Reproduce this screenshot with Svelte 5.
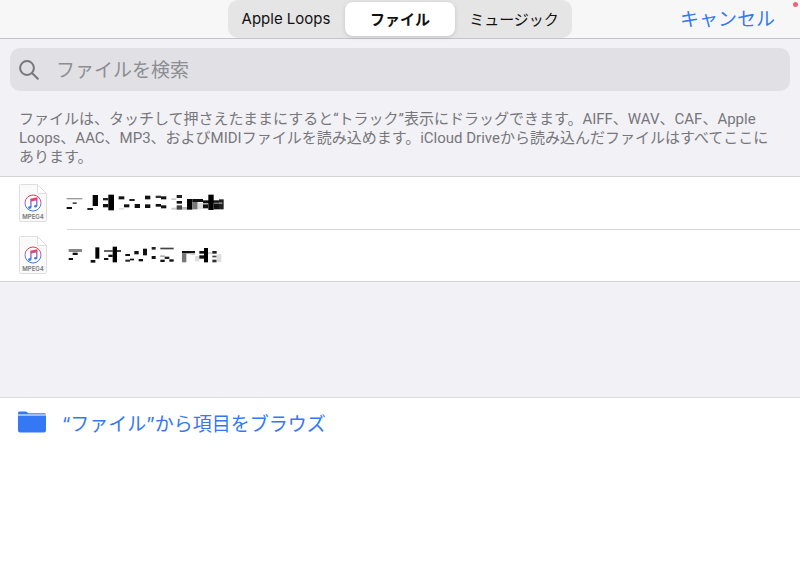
<script lang="ts">
  type Block = [x: number, y: number, w: number, h: number, shade: string];

  interface FileEntry {
    id: number;
    type: string;
    blocks: Block[];
  }

  const tabs = ['Apple Loops', 'ファイル', 'ミュージック'];

  // file names are pixelated, each block is one run of the mosaic
  const files: FileEntry[] = [
    {
      id: 1,
      type: 'MPEG4',
      blocks: [
        [20, 36, 47, 4, '#999'], [38, 49, 12, 5, '#444'], [20, 63, 16, 6, '#111'],
        [98, 27, 16, 33, '#080808'], [82, 66, 17, 6, '#222'],
        [145, 26, 17, 47, '#000'], [129, 36, 16, 7, '#222'], [129, 54, 16, 10, '#111'],
        [176, 31, 17, 9, '#111'], [176, 66, 16, 5, '#ddd'], [192, 55, 16, 9, '#111'],
        [208, 39, 16, 6, '#222'], [224, 54, 16, 12, '#111'],
        [255, 29, 16, 11, '#111'], [255, 55, 16, 11, '#111'],
        [287, 29, 16, 7, '#333'], [303, 31, 16, 9, '#111'], [287, 54, 16, 8, '#111'], [303, 58, 16, 9, '#111'],
        [334, 37, 15, 5, '#ccc'], [350, 27, 16, 9, '#222'], [350, 45, 16, 8, '#111'],
        [334, 65, 16, 6, '#ccc'], [350, 58, 16, 13, '#444'], [366, 63, 16, 8, '#bbb'],
        [381, 39, 16, 32, '#050505'], [397, 39, 32, 9, '#111'], [397, 48, 16, 22, '#777'],
        [413, 50, 16, 20, '#ddd'], [429, 43, 60, 9, '#111'], [429, 55, 16, 12, '#111'],
        [445, 26, 16, 46, '#000'], [461, 54, 16, 16, '#111'], [477, 40, 14, 30, '#222'],
        [477, 49, 10, 5, '#888'], [461, 49, 16, 4, '#555']
      ]
    },
    {
      id: 2,
      type: 'MPEG4',
      blocks: [
        [26, 33, 40, 9, '#888'], [38, 44, 15, 7, '#111'], [26, 60, 13, 6, '#111'],
        [106, 28, 12, 34, '#050505'], [92, 66, 14, 8, '#111'],
        [132, 36, 26, 6, '#666'], [171, 36, 12, 6, '#444'], [145, 50, 13, 7, '#111'],
        [132, 60, 13, 6, '#111'], [158, 26, 13, 47, '#000'],
        [196, 48, 14, 6, '#111'], [196, 65, 14, 6, '#222'], [210, 62, 12, 5, '#111'],
        [223, 39, 13, 10, '#111'], [236, 63, 13, 7, '#111'], [249, 32, 12, 20, '#111'],
        [275, 27, 12, 8, '#222'], [275, 54, 12, 9, '#111'],
        [301, 29, 40, 5, '#444'], [301, 52, 13, 5, '#aaa'], [314, 56, 14, 7, '#222'],
        [301, 65, 13, 7, '#111'], [328, 64, 13, 7, '#111'],
        [366, 39, 39, 7, '#111'], [366, 46, 13, 27, '#777'], [392, 46, 13, 5, '#ccc'],
        [405, 54, 13, 16, '#ddd'], [418, 39, 14, 8, '#111'], [418, 52, 14, 10, '#111'],
        [432, 30, 12, 43, '#000'], [444, 43, 13, 5, '#ccc'], [457, 39, 13, 8, '#222'],
        [457, 53, 13, 5, '#444'], [457, 65, 13, 8, '#333'], [470, 49, 14, 23, '#ddd']
      ]
    }
  ];

  let selected = $state('ファイル');
  let query = $state('');
</script>

<div class="picker">
  <header class="top-bar">
    <div class="segments">
      {#each tabs as tab}
        <button type="button" class="segment" class:active={selected === tab} aria-pressed={selected === tab} onclick={() => (selected = tab)}>
          {tab}
        </button>
      {/each}
    </div>
    <button type="button" class="cancel">キャンセル</button>
    <span class="indicator"></span>
  </header>

  <div class="intro">
    <label class="search">
      <svg class="search-icon" viewBox="0 0 20 20" aria-hidden="true">
        <circle cx="8" cy="8" r="6.9" />
        <path d="M13 13l5.800 5.800" />
      </svg>
      <input type="text" placeholder="ファイルを検索" aria-label="ファイルを検索" bind:value={query} />
    </label>
    <p class="hint">
      ファイルは、タッチして押さえたままにすると“トラック”表示にドラッグできます。AIFF、WAV、CAF、Apple<br />
      Loops、AAC、MP3、およびMIDIファイルを読み込めます。iCloud Driveから読み込んだファイルはすべてここに<br />
      あります。
    </p>
  </div>

  <ul class="files">
    {#each files as file (file.id)}
      <li class="file">
        <svg class="file-icon" viewBox="0 0 28 38" aria-hidden="true">
          <defs>
            <linearGradient id="note-{file.id}" gradientUnits="userSpaceOnUse" x1="0" y1="11" x2="0" y2="27">
              <stop offset="0.15" stop-color="#f03a50" />
              <stop offset="0.5" stop-color="#a06bd0" />
              <stop offset="0.8" stop-color="#2f7cf0" />
            </linearGradient>
          </defs>
          <path class="sheet" d="M1.5.5H18.500L27.500 9.500V36.500Q27.500 37.500 26.500 37.500H1.500Q.5 37.500.5 36.500V1.500Q.5.5 1.500.5Z" />
          <path class="fold" d="M18.500.5V8.500Q18.500 9.500 19.500 9.500H27.500Z" />
          <circle cx="14" cy="19" r="8" fill="#fff" stroke="url(#note-{file.id})" stroke-width="1" />
          <path
            fill="url(#note-{file.id})"
            d="M11.200 14.800L18.500 13.200V21.500Q18.500 23.400 16.700 23.600Q14.900 23.700 14.900 22.300Q14.900 21 17.100 20.700V16.500L12.600 17.500V22.700Q12.600 24.700 10.800 24.900Q9 24.900 9 23.600Q9 22.200 11.200 21.900Z"
          />
          <text x="14" y="35" text-anchor="middle">{file.type}</text>
        </svg>
        <svg class="file-name" viewBox="0 0 540 105" aria-hidden="true">
          {#each file.blocks as [x, y, w, h, shade]}
            <rect {x} {y} width={w} height={h} fill={shade} />
          {/each}
        </svg>
      </li>
    {/each}
  </ul>

  <section class="browse-area">
    <button type="button" class="browse">
      <svg class="folder" viewBox="0 0 28 22" aria-hidden="true">
        <path d="M0 3.500V2Q0 .5 1.500.5H7.500Q8.500.5 9.200 1.200L10.200 2.200H26.200Q28 2.200 28 3.500Z" />
        <path d="M0 4.500H28V19.500Q28 21.500 26 21.500H2Q0 21.500 0 19.500Z" />
        <path class="folder-edge" d="M1 3.500H28V4.500H1Z" />
      </svg>
      <span>“ファイル”から項目をブラウズ</span>
    </button>
  </section>
</div>

<style>
  :global(body) {
    margin: 0;
    background: #fff;
  }

  .picker,
  button,
  input {
    font-family: Inter, 'Noto Sans CJK JP', sans-serif;
  }

  .picker {
    display: flex;
    flex-direction: column;
    color: #111;
  }

  button {
    border: 0;
    padding: 0;
    background: none;
    cursor: pointer;
  }

  .top-bar {
    position: relative;
    display: grid;
    grid-template-columns: 1fr 344px 1fr;
    height: 38px;
    background: #f7f7f7;
    border-bottom: 1px solid #c4c4c6;
  }

  .segments {
    grid-column: 2;
    display: grid;
    grid-template-columns: 1fr 110px 1fr;
    gap: 3px;
    padding: 2px;
    border-radius: 10px;
    background: #e5e5e6;
  }

  .segment {
    padding-bottom: 2px;
    border-radius: 8px;
    font-size: 15px;
    color: #111;
    white-space: nowrap;
  }

  .segment.active {
    background: #fff;
    font-weight: 700;
    box-shadow: 0 1px 4px rgba(0, 0, 0, 0.15);
  }

  .cancel {
    justify-self: end;
    margin-right: 25px;
    padding-bottom: 4px;
    font-size: 19px;
    color: #3478f6;
  }

  .indicator {
    position: absolute;
    top: 2px;
    right: 2px;
    width: 5px;
    height: 5px;
    border-radius: 50%;
    background: #ee6672;
  }

  .intro {
    padding: 9px 10px;
    background: #f2f1f6;
  }

  .search {
    display: flex;
    align-items: center;
    gap: 17px;
    height: 43px;
    padding: 0 9px;
    border-radius: 10px;
    background: #e1e0e5;
  }

  .search-icon {
    flex: none;
    width: 20px;
    height: 20px;
    fill: none;
    stroke: #77777c;
    stroke-width: 2;
    stroke-linecap: round;
  }

  .search input {
    flex: 1;
    min-width: 0;
    border: 0;
    padding: 2px 0 0;
    outline: none;
    background: none;
    font-size: 19px;
    color: #111;
  }

  .search input::placeholder {
    color: #8d8d92;
    opacity: 1;
  }

  .hint {
    margin: 19px 0 0;
    padding: 0 9px;
    font-family: Roboto, 'Noto Sans CJK JP', sans-serif;
    font-size: 15px;
    line-height: 19px;
    color: #77777b;
    white-space: nowrap;
  }

  .files {
    margin: 0;
    padding: 0;
    list-style: none;
    background: #fff;
    border-top: 1px solid #d3d2d7;
    border-bottom: 1px solid #d3d2d7;
  }

  .file {
    display: flex;
    align-items: center;
    gap: 13px;
    height: 52px;
    padding-left: 19px;
  }

  .file + .file {
    background: linear-gradient(#d6d6d9, #d6d6d9) 67px 0 / 100% 1px no-repeat;
  }

  .file-icon {
    width: 28px;
    height: 38px;
  }

  .file-icon text {
    font-family: Inter, sans-serif;
    font-size: 6px;
    font-weight: 600;
    fill: #77777b;
  }

  .sheet,
  .fold {
    fill: #fafafa;
    stroke: #dedee0;
    stroke-width: 1;
  }

  .fold {
    fill: #fff;
  }

  .file-name {
    width: 180px;
    height: 35px;
  }

  .browse-area {
    border-top: 115px solid #f2f1f6;
    box-shadow: inset 0 1px #dcdbe0;
  }

  .browse {
    display: flex;
    align-items: center;
    gap: 16px;
    width: 100%;
    height: 50px;
    padding-left: 18px;
    font-size: 19px;
    color: #3478f6;
    text-align: left;
  }

  .folder {
    width: 28px;
    height: 22px;
    fill: #3478f6;
  }

  .folder-edge {
    fill: #9fc0fb;
  }
</style>
